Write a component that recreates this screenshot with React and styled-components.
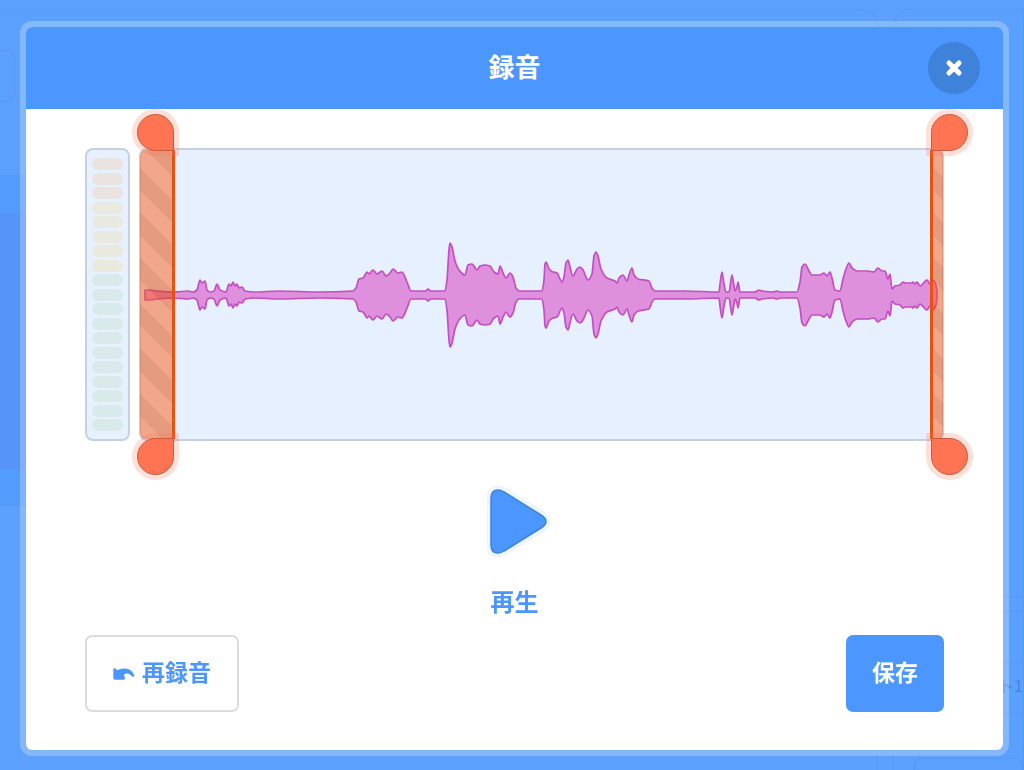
import React from "react";
import styled, { createGlobalStyle } from "styled-components";

const GlobalStyle = createGlobalStyle`
  * {
    box-sizing: border-box;
  }
  body {
    margin: 0;
    background: #5ba0fc;
    font-family: "Liberation Sans", "Noto Sans CJK JP", sans-serif;
  }
  button {
    font-family: inherit;
    padding: 0;
    cursor: pointer;
  }
`;

const Editor = styled.div`
  position: fixed;
  inset: 0;
  display: grid;
  grid-template-columns: 1fr 131px;
  gap: 15px;
  padding-top: 9px;
  overflow: hidden;
`;

const Pane = styled.div`
  border: 1px solid #5799f3;
  border-left-width: ${(props) => (props.side === "right" ? "1px" : "0")};
  border-radius: ${(props) => (props.side === "right" ? "16px 0 0 0" : "0 16px 0 0")};
  border-bottom: 0;
`;

const PaneField = styled.div`
  width: 15px;
  height: 52px;
  margin: 40px 0 73px;
  border: 1px solid #5799f3;
  border-left: 0;
  border-radius: 0 8px 8px 0;
`;

const PaneStage = styled.div`
  height: 331px;
  padding: 37px 0;
  border: 1px solid #5799f3;
  border-left: 0;
  border-right: 0;
  background: #539bfd;

  &::before {
    content: "";
    display: block;
    width: 100%;
    height: 256px;
    background: #5794fa;
  }
`;

const PaneRow = styled.div`
  height: ${(props) => props.height}px;
  border-bottom: 1px solid #5598f3;
`;

const SpriteName = styled.div`
  height: 51px;
  border-bottom: 1px solid #5598f3;
  color: #4484e0;
  font-size: 16px;
  line-height: 48px;
  text-align: right;
`;

const SpriteTile = styled.div`
  height: 60px;
  margin: 44px 0 0 20px;
  border: 1px solid #5598f3;
  border-radius: 8px;
`;

const Overlay = styled.div`
  position: relative;
  padding: 21px 15px 14px 20px;
`;

const Modal = styled.section`
  border: 6px solid rgba(255, 255, 255, 0.25);
  border-radius: 12px;
  background: #fff;
  background-clip: padding-box;
`;

const Header = styled.header`
  display: grid;
  grid-template-columns: 52px 1fr 52px;
  align-items: center;
  height: 82px;
  padding: 0 23px;
  border-radius: 6px 6px 0 0;
  background: #4c97ff;
`;

const Title = styled.h1`
  grid-column: 2;
  margin: 0;
  color: #fff;
  font-size: 26px;
  font-weight: 700;
  line-height: 40px;
  text-align: center;
`;

const CloseButton = styled.button`
  display: flex;
  align-items: center;
  justify-content: center;
  width: 52px;
  height: 52px;
  border: 0;
  border-radius: 50%;
  background: #3f82da;
`;

const Body = styled.div`
  padding: 39px 59px 38px;
`;

const Recording = styled.div`
  display: flex;
  gap: 9px;
  height: 293px;
`;

const Meter = styled.div`
  display: flex;
  flex-direction: column;
  justify-content: space-between;
  width: 45px;
  padding: 8px 5px;
  border: 2px solid #c5d0e2;
  border-radius: 8px;
  background: #e6f0ff;
`;

const meterColors = {
  red: "#ebe3e0",
  yellow: "#e9e9df",
  green: "#d8eae9",
};

const MeterSegment = styled.div`
  height: 12px;
  border-radius: 6px;
  background: ${(props) => meterColors[props.level]};
`;

const WaveBox = styled.div`
  position: relative;
  flex: 1;
  border: 2px solid #c5d0e2;
  border-radius: 8px;
  background: #e6f0ff;
`;

const WaveSvg = styled.svg`
  display: block;
  width: 100%;
  height: 100%;
`;

const Trim = styled.div`
  position: absolute;
  top: 0;
  bottom: 0;
  ${(props) => props.side}: -1px;
  width: ${(props) => (props.side === "left" ? 35 : 13)}px;
  border-radius: ${(props) =>
    props.side === "left" ? "6px 0 0 6px" : "0 6px 6px 0"};
  background: repeating-linear-gradient(
    45deg,
    rgba(252, 94, 25, 0.5) 0 16px,
    rgba(226, 72, 1, 0.5) 16px 32px
  );
  border-${(props) => (props.side === "left" ? "right" : "left")}: 3px solid #e9510e;
  background-clip: padding-box;
`;

const handleRadius = {
  "left-top": "50% 50% 0 50%",
  "left-bottom": "50% 0 50% 50%",
  "right-top": "50% 50% 50% 0",
  "right-bottom": "0 50% 50% 50%",
};

const Handle = styled.button`
  position: absolute;
  ${(props) => props.edge}: -36px;
  ${(props) => (props.side === "left" ? "right" : "left")}: -2px;
  width: 37px;
  height: 37px;
  border: 1px solid #cc5a3a;
  border-radius: ${(props) => handleRadius[`${props.side}-${props.edge}`]};
  background: #ff7452;
  box-shadow: 0 0 0 5px rgba(255, 116, 82, 0.22);
`;

const PlayButton = styled.button`
  display: flex;
  flex-direction: column;
  align-items: center;
  gap: 27px;
  margin: 44px auto 14px;
  border: 0;
  background: none;
  color: #4c97ff;
  font-size: 24px;
  font-weight: 700;
  line-height: 36px;
`;

const Actions = styled.div`
  display: flex;
  justify-content: space-between;
`;

const ActionButton = styled.button`
  display: flex;
  align-items: center;
  gap: 7px;
  height: 77px;
  padding: 0 26px;
  border: ${(props) => (props.primary ? "0" : "2px solid #dcdcdc")};
  border-radius: 7px;
  background: ${(props) => (props.primary ? "#4c97ff" : "#fff")};
  color: ${(props) => (props.primary ? "#fff" : "#4c97ff")};
  font-size: 23px;
  font-weight: 700;
`;

const ActionLabel = styled.span`
  padding-bottom: 6px;
`;

// [x, amplitude]
const samples = [
  [6, 5], [11, 5], [18, 4], [36, 3], [49, 4], [54, 3], [58, 5], [61, 15],
  [63, 12], [66, 14], [68, 5], [71, 3], [75, 4], [78, 11], [81, 5], [87, 3],
  [90, 11], [92, 9], [94, 13], [96, 9], [98, 11], [100, 7], [103, 8], [106, 4],
  [116, 3], [140, 4], [180, 3], [214, 4], [217, 7], [220, 16], [224, 17],
  [228, 23], [230, 21], [234, 25], [238, 21], [243, 24], [247, 19], [251, 22],
  [254, 26], [259, 22], [263, 23], [268, 13], [272, 4], [287, 4], [289, 6],
  [292, 4], [306, 4], [308, 15], [310, 45], [311, 52], [313, 48], [316, 34],
  [320, 25], [326, 20], [329, 30], [333, 31], [338, 25], [341, 29], [346, 30],
  [351, 29], [355, 23], [359, 21], [361, 29], [364, 22], [367, 17], [371, 22],
  [374, 18], [377, 7], [380, 4], [403, 4], [405, 15], [406, 31], [407, 33],
  [410, 26], [414, 23], [418, 22], [423, 13], [425, 18], [427, 32], [429, 35],
  [430, 32], [434, 19], [438, 26], [441, 28], [444, 25], [449, 15], [453, 21],
  [455, 39], [457, 43], [459, 39], [462, 26], [468, 17], [476, 14], [478, 12],
  [480, 17], [484, 20], [488, 14], [490, 20], [493, 27], [495, 20], [499, 16],
  [510, 14], [513, 7], [516, 4], [546, 4], [580, 3], [581, 11], [583, 23],
  [585, 11], [587, 3], [590, 3], [592, 15], [593, 20], [595, 9], [596, 4],
  [598, 8], [599, 13], [601, 3], [616, 3], [620, 5], [623, 4], [634, 3],
  [638, 4], [641, 3], [658, 3], [661, 13], [663, 28], [666, 31], [669, 26],
  [673, 20], [681, 20], [685, 22], [688, 19], [691, 23], [693, 17], [696, 5],
  [701, 4], [704, 16], [707, 26], [710, 32], [713, 27], [718, 24], [729, 24],
  [735, 23], [739, 27], [743, 24], [746, 24], [749, 16], [751, 21], [753, 6],
  [756, 9], [761, 10], [764, 13], [766, 12], [773, 12], [774, 13], [776, 11],
  [778, 13], [781, 9], [788, 15], [791, 11], [794, 15], [797, 10], [798, 5],
];

const MIDDLE = 147;

// slope at a sample, flat at every peak so the curve never overshoots
const slopeAt = (points, i) => {
  const before = points[i - 1];
  const p = points[i];
  const after = points[i + 1];
  if (!before || !after) return 0;
  const a = (p[1] - before[1]) / (p[0] - before[0]);
  const b = (after[1] - p[1]) / (after[0] - p[0]);
  return a * b <= 0 ? 0 : (2 * a * b) / (a + b);
};

const smooth = (points) =>
  points
    .slice(0, -1)
    .map((p, i) => {
      const next = points[i + 1];
      const step = (next[0] - p[0]) / 3;
      const c1 = [p[0] + step, p[1] + step * slopeAt(points, i)];
      const c2 = [next[0] - step, next[1] - step * slopeAt(points, i + 1)];
      return `C${c1} ${c2} ${next}`;
    })
    .join(" ");

const wavePath = () => {
  const top = samples.map(([x, a]) => [x, MIDDLE - a]);
  const bottom = samples.map(([x, a]) => [x, MIDDLE + a]).reverse();
  return `M${top[0]} ${smooth(top)} L${bottom[0]} ${smooth(bottom)} Z`;
};

const levels = [
  ...Array(3).fill("red"),
  ...Array(5).fill("yellow"),
  ...Array(11).fill("green"),
];

const Waveform = () => (
  <WaveSvg viewBox="2 2 801 289" preserveAspectRatio="none" aria-hidden="true">
    <path
      d={wavePath()}
      fill="#df90dc"
      stroke="#c44dc3"
      strokeWidth="1.7"
      strokeLinejoin="round"
    />
  </WaveSvg>
);

const CloseIcon = () => (
  <svg width="18" height="18" viewBox="0 0 18 18" aria-hidden="true">
    <path
      d="M4 4 L14 14 M14 4 L4 14"
      stroke="#fff"
      strokeWidth="5"
      strokeLinecap="round"
    />
  </svg>
);

const PlayIcon = () => (
  <svg width="73" height="73" viewBox="-12 -4 73 73" aria-hidden="true">
    <path
      d="M0 9 Q0 0 8 0 Q11 0 14 2 L52 25 Q57 28 57 32.5 Q57 37 52 40 L14 63 Q11 65 8 65 Q0 65 0 56 Z"
      stroke="#eef5ff"
      strokeWidth="7"
      strokeLinejoin="round"
    />
    <path
      d="M1 9 Q1 1 8 1 Q11 1 14 3 L51 26 Q56 29 56 32.5 Q56 36 51 39 L14 62 Q11 64 8 64 Q1 64 1 56 Z"
      fill="#4c97ff"
      stroke="#3d83df"
      strokeWidth="1.5"
    />
  </svg>
);

const RedoIcon = () => (
  <svg width="22" height="12" viewBox="0 0 66 36" aria-hidden="true">
    <path
      d="M1 4 Q1 0 6 1 L12 6 Q17 6 22 3 Q50 -3 62 18 Q66 25 61 26 Q58 27 55 23 Q47 14 36 18 Q31 20 34 25 L36 29 Q37 34 32 35 L6 35 Q1 35 1 30 Z"
      fill="#4c97ff"
    />
  </svg>
);

const TrimComponent = ({ side, label }) => (
  <Trim side={side}>
    <Handle type="button" side={side} edge="top" aria-label={label} />
    <Handle type="button" side={side} edge="bottom" aria-label={label} />
  </Trim>
);

const App = () => {
  return (
    <>
      <GlobalStyle />
      <Editor aria-hidden="true">
        <Pane side="left">
          <PaneField />
          <PaneStage />
        </Pane>
        <Pane side="right">
          <PaneRow height={587} />
          <PaneRow height={15} />
          <PaneRow height={51} />
          <SpriteName>ト1</SpriteName>
          <SpriteTile />
        </Pane>
      </Editor>
      <Overlay>
        <Modal role="dialog" aria-labelledby="record-title">
          <Header>
            <Title id="record-title">録音</Title>
            <CloseButton type="button" aria-label="閉じる">
              <CloseIcon />
            </CloseButton>
          </Header>
          <Body>
            <Recording>
              <Meter>
                {levels.map((level, i) => (
                  <MeterSegment key={i} level={level} />
                ))}
              </Meter>
              <WaveBox>
                <Waveform />
                <TrimComponent side="left" label="開始位置" />
                <TrimComponent side="right" label="終了位置" />
              </WaveBox>
            </Recording>
            <PlayButton type="button">
              <PlayIcon />
              再生
            </PlayButton>
            <Actions>
              <ActionButton type="button">
                <RedoIcon />
                <ActionLabel>再録音</ActionLabel>
              </ActionButton>
              <ActionButton type="button" primary>
                <ActionLabel>保存</ActionLabel>
              </ActionButton>
            </Actions>
          </Body>
        </Modal>
      </Overlay>
    </>
  );
};

export default App;
